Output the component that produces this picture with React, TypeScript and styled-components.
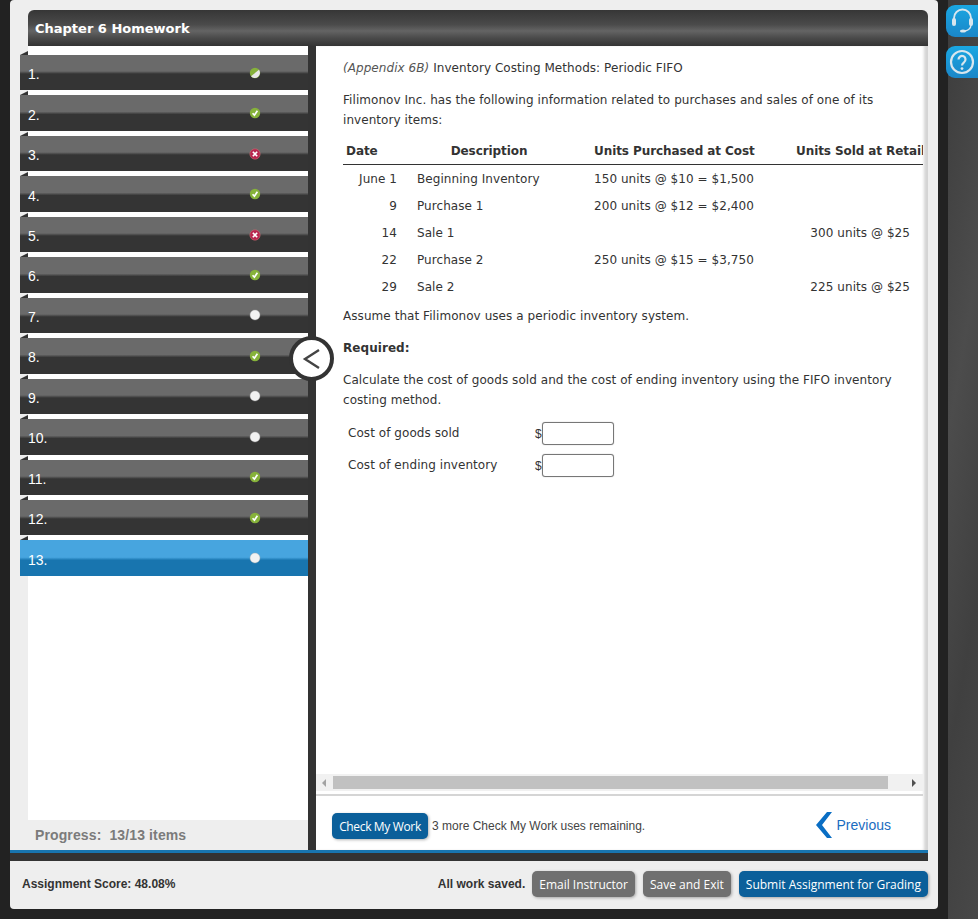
import React from 'react';
import styled, { createGlobalStyle } from 'styled-components';

const GlobalStyle = createGlobalStyle`
  html, body {
    margin: 0;
    padding: 0;
    background: #222;
    overflow: hidden;
  }
`;

type Status = 'partial' | 'correct' | 'wrong' | 'empty';

const questions: Status[] = [
  'partial', 'correct', 'wrong', 'correct', 'wrong', 'correct', 'empty',
  'correct', 'empty', 'empty', 'correct', 'correct', 'empty',
];

const inventoryRows = [
  { date: 'June 1', description: 'Beginning Inventory', purchased: '150 units @ $10 = $1,500', sold: '' },
  { date: '9', description: 'Purchase 1', purchased: '200 units @ $12 = $2,400', sold: '' },
  { date: '14', description: 'Sale 1', purchased: '', sold: '300 units @ $25' },
  { date: '22', description: 'Purchase 2', purchased: '250 units @ $15 = $3,750', sold: '' },
  { date: '29', description: 'Sale 2', purchased: '', sold: '225 units @ $25' },
];

const Page = styled.div`
  display: flex;
  width: 978px;
  height: 919px;
  overflow: hidden;
  background: #222;
`;

const Panel = styled.div`
  width: 928px;
  height: 909px;
  margin-left: 10px;
  background: #eee;
  border-radius: 4px;
  display: flex;
  flex-direction: column;
  flex-shrink: 0;
`;

const Title = styled.header`
  width: 900px;
  height: 36px;
  margin: 10px 0 0 18px;
  padding-left: 7px;
  box-sizing: border-box;
  display: flex;
  align-items: center;
  border-radius: 6px 6px 0 0;
  background: linear-gradient(#363636 0%, #4a4a4a 40%, #646464 58%, #4a4a4a 78%, #343434 100%);
  color: #fff;
  font: bold 13px 'DejaVu Sans', Verdana, sans-serif;
`;

const Body = styled.div`
  display: flex;
  height: 804px;
  width: 918px;
`;

const Sidebar = styled.aside`
  width: 298px;
  display: flex;
  flex-direction: column;
`;

const QuestionList = styled.ol`
  list-style: none;
  height: 774px;
  margin: 0 0 0 18px;
  padding: 9px 0 0;
  box-sizing: border-box;
  background: #fff;
  display: flex;
  flex-direction: column;
  gap: 5px;
`;

const QuestionRow = styled.li<{ $active?: boolean }>`
  position: relative;
  height: 35.4532px;
  margin-left: -8px;
  padding: 3px 47px 0 8px;
  box-sizing: border-box;
  display: flex;
  align-items: center;
  justify-content: space-between;
  color: #fff;
  font: 14px 'Liberation Sans', Arial, sans-serif;
  background: ${(p) =>
    p.$active
      ? 'linear-gradient(#47a5df 0, #47a5df 48%, #1875af 56%, #1875af 100%)'
      : 'linear-gradient(#6a6a6a 0, #6a6a6a 46%, #343434 54%, #343434 100%)'};

  &::before {
    content: '';
    position: absolute;
    left: 0;
    top: -4px;
    border-style: solid;
    border-width: 0 0 4px 8px;
    border-color: transparent transparent #333 transparent;
  }
`;

const StatusMark = styled.svg`
  display: block;
  width: 12px;
  height: 12px;
  margin-top: -3px;
`;

const Progress = styled.div`
  height: 30px;
  padding: 0 0 0 25px;
  display: flex;
  align-items: center;
  color: #7b7b7b;
  font: bold 14px 'Liberation Sans', Arial, sans-serif;
  letter-spacing: 0.12px;
  white-space: pre;
`;

const Main = styled.main`
  position: relative;
  width: 620px;
  border-left: 8px solid #333;
  box-sizing: border-box;
  display: flex;
  flex-direction: column;
  background: #fff;
  box-shadow: inset -5px 0 3px -1px #d4d4d4;
`;

const CollapseButton = styled.button`
  position: absolute;
  left: -27px;
  top: 290px;
  width: 45px;
  height: 45px;
  padding: 0;
  border: 4px solid #333;
  border-radius: 50%;
  box-sizing: border-box;
  background: #fff;
  display: flex;
  align-items: center;
  justify-content: center;
`;

const Content = styled.div`
  flex: 1;
  min-height: 0;
  width: 607px;
  padding: 12px 0 0 27px;
  box-sizing: border-box;
  overflow: hidden;
  color: #333;
  font: 12px/20px 'DejaVu Sans', Verdana, sans-serif;
  letter-spacing: 0.06px;
`;

const Paragraph = styled.p<{ $gap?: number }>`
  margin: ${(p) => p.$gap ?? 12}px 0 0;
  width: 562px;
`;

const Muted = styled.em`
  color: #555;
`;

const InventoryTable = styled.table`
  table-layout: fixed;
  width: 587px;
  margin-top: 7px;
  border-collapse: collapse;
`;

const HeadCell = styled.th<{ $pad?: string; $align?: string }>`
  height: 27px;
  padding: ${(p) => p.$pad ?? '0'};
  text-align: ${(p) => p.$align ?? 'left'};
  border-bottom: 1px solid #333;
  white-space: nowrap;
  overflow: visible;
  letter-spacing: -0.08px;
`;

const Cell = styled.td<{ $pad?: string; $align?: string }>`
  height: 27px;
  padding: ${(p) => p.$pad ?? '0'};
  text-align: ${(p) => p.$align ?? 'left'};
  white-space: nowrap;
`;

const AnswerGrid = styled.div`
  display: flex;
  flex-direction: column;
  gap: 9px;
  margin: 12px 0 0 5px;
`;

const AnswerRow = styled.label`
  display: flex;
  align-items: center;
  height: 23px;
`;

const AnswerLabel = styled.span`
  width: 187px;
  margin-top: -1px;
`;

const Dollar = styled.span`
  font: 12px 'Liberation Sans', Arial, sans-serif;
`;

const AnswerInput = styled.input`
  width: 72px;
  height: 23px;
  padding: 0;
  box-sizing: border-box;
  background: #fff;
  border: 1px solid #777;
  border-radius: 3px;
  box-shadow: 0 0 1px #999;
`;

const ScrollTrack = styled.div`
  width: 607px;
  height: 17px;
  margin-bottom: 3px;
  display: flex;
  align-items: center;
  background: #f1f1f1;
  flex-shrink: 0;
`;

const ScrollArrow = styled.span<{ $side: 'left' | 'right' }>`
  width: 0;
  height: 0;
  margin: ${(p) => (p.$side === 'left' ? '0 7px 0 6px' : '0 0 0 24px')};
  border-style: solid;
  border-width: 4px 0 4px 4px;
  border-color: transparent transparent transparent #505050;
  ${(p) => p.$side === 'left' && 'border-width: 4px 4px 4px 0; border-color: transparent #a3a3a3 transparent transparent;'}
`;

const ScrollThumb = styled.div`
  width: 555px;
  height: 13px;
  background: #c1c1c1;
`;

const ActionBar = styled.div`
  width: 607px;
  height: 56px;
  padding: 0 32px 0 16px;
  box-sizing: border-box;
  border-top: 2px solid #d5d5d5;
  display: flex;
  align-items: center;
  flex-shrink: 0;
  font: 12px 'Liberation Sans', Arial, sans-serif;
  color: #444;
`;

const Button = styled.button<{ $tone: 'blue' | 'gray' }>`
  height: 26px;
  padding: 0 7px;
  border: 0;
  border-radius: 5px;
  color: #fff;
  white-space: nowrap;
  background: ${(p) => (p.$tone === 'blue' ? '#0b5f9a' : '#707070')};
  box-shadow: 1px 1px 3px rgba(0, 0, 0, 0.3);
  font: 12px 'Open Sans', sans-serif;
`;

const CheckButton = styled(Button)`
  width: 96px;
  padding: 0;
  margin: 6px 4px 0 0;
  letter-spacing: -0.35px;
`;

const Remaining = styled.span`
  margin-top: 6px;
`;

const PreviousLink = styled.a`
  margin-left: auto;
  display: flex;
  align-items: center;
  gap: 5px;
  margin-top: 4px;
  color: #1a6cc0;
  font-size: 14px;
`;

const Stripe = styled.div`
  height: 11px;
  width: 918px;
  box-sizing: border-box;
  background: #333;
  border-top: 3px solid #1875af;
  flex-shrink: 0;
`;

const BottomBar = styled.footer`
  flex: 1;
  display: flex;
  align-items: center;
  padding: 0 10px 2px 12px;
  box-sizing: border-box;
  color: #333;
  font: bold 12px 'Liberation Sans', Arial, sans-serif;
`;

const SavedNote = styled.span`
  margin: 0 7px 0 auto;
`;

const FooterButtons = styled.div`
  display: flex;
  gap: 8px;
`;

const Rail = styled.div`
  flex: none;
  width: 30px;
  height: 919px;
  margin-left: 10px;
  padding-top: 5px;
  box-sizing: border-box;
  display: flex;
  flex-direction: column;
  gap: 9px;
  background: linear-gradient(100deg, #3c3c3c, #4c4c4c 40%, #404040 70%, #484848);
`;

const RailButton = styled.button`
  width: 32px;
  height: 32px;
  margin-left: -2px;
  padding: 0;
  border: 0;
  border-radius: 9px 0 0 9px;
  background: linear-gradient(#1aa7e2, #1a86c8);
  display: flex;
  align-items: center;
  justify-content: center;
  flex-shrink: 0;
`;

const StatusIcon = ({ status }: { status: Status }) => {
  if (status === 'empty') {
    return (
      <StatusMark viewBox="0 0 12 12">
        <circle cx="6" cy="6" r="5" fill="#f2f2f2" stroke="#aaa" strokeWidth="0.4" />
      </StatusMark>
    );
  }
  if (status === 'wrong') {
    return (
      <StatusMark viewBox="0 0 12 12">
        <circle cx="6" cy="6" r="5.2" fill="#b8264f" stroke="#c77" strokeWidth="0.5" />
        <path d="M3.8 3.8l4.4 4.4M8.2 3.8l-4.4 4.4" stroke="#fff" strokeWidth="1.6" />
      </StatusMark>
    );
  }
  if (status === 'partial') {
    return (
      <StatusMark viewBox="0 0 12 12">
        <circle cx="6" cy="6" r="5.2" fill="#86b23a" />
        <path d="M10 2.7A5.2 5.2 0 0 1 2 9.3z" fill="#e8e8e8" />
      </StatusMark>
    );
  }
  return (
    <StatusMark viewBox="0 0 12 12">
      <circle cx="6" cy="6" r="5.2" fill="#86b23a" />
      <path d="M3.6 6.2l1.8 2 3-4.4" fill="none" stroke="#fff" strokeWidth="1.7" />
    </StatusMark>
  );
};

export default function App() {
  return (
    <Page>
      <GlobalStyle />
      <Panel>
        <Title>Chapter 6 Homework</Title>
        <Body>
          <Sidebar>
            <QuestionList>
              {questions.map((status, i) => (
                <QuestionRow key={i} $active={i === 12}>
                  <span>{i + 1}.</span>
                  <StatusIcon status={status} />
                </QuestionRow>
              ))}
            </QuestionList>
            <Progress>Progress:  13/13 items</Progress>
          </Sidebar>
          <Main>
            <CollapseButton aria-label="Collapse">
              <svg width="22" height="24" viewBox="0 0 22 24">
                <path d="M18 3L4 12l14 9" fill="none" stroke="#444" strokeWidth="2.4" />
              </svg>
            </CollapseButton>
            <Content>
              <Paragraph $gap={0}>
                <Muted>(Appendix 6B)</Muted> Inventory Costing Methods: Periodic FIFO
              </Paragraph>
              <Paragraph>
                Filimonov Inc. has the following information related to purchases and sales of one of its inventory items:
              </Paragraph>
              <InventoryTable>
                <colgroup>
                  <col width="64" />
                  <col width="177" />
                  <col width="202" />
                  <col width="144" />
                </colgroup>
                <thead>
                  <tr>
                    <HeadCell $pad="0 0 0 3px">Date</HeadCell>
                    <HeadCell $align="center" $pad="0 13px 0 0">Description</HeadCell>
                    <HeadCell $pad="0 0 0 10px">Units Purchased at Cost</HeadCell>
                    <HeadCell $pad="0 0 0 10px">Units Sold at Retail</HeadCell>
                  </tr>
                </thead>
                <tbody>
                  {inventoryRows.map((row) => (
                    <tr key={row.date}>
                      <Cell $align="right" $pad="0 10px 0 0">{row.date}</Cell>
                      <Cell $pad="0 0 0 10px">{row.description}</Cell>
                      <Cell $pad="0 0 0 10px">{row.purchased}</Cell>
                      <Cell $align="right" $pad="0 20px 0 0">{row.sold}</Cell>
                    </tr>
                  ))}
                </tbody>
              </InventoryTable>
              <Paragraph $gap={6}>Assume that Filimonov uses a periodic inventory system.</Paragraph>
              <Paragraph><strong>Required:</strong></Paragraph>
              <Paragraph>
                Calculate the cost of goods sold and the cost of ending inventory using the FIFO inventory costing method.
              </Paragraph>
              <AnswerGrid>
                <AnswerRow>
                  <AnswerLabel>Cost of goods sold</AnswerLabel>
                  <Dollar>$</Dollar>
                  <AnswerInput />
                </AnswerRow>
                <AnswerRow>
                  <AnswerLabel>Cost of ending inventory</AnswerLabel>
                  <Dollar>$</Dollar>
                  <AnswerInput />
                </AnswerRow>
              </AnswerGrid>
            </Content>
            <ScrollTrack>
              <ScrollArrow $side="left" />
              <ScrollThumb />
              <ScrollArrow $side="right" />
            </ScrollTrack>
            <ActionBar>
              <CheckButton $tone="blue">Check My Work</CheckButton>
              <Remaining>3 more Check My Work uses remaining.</Remaining>
              <PreviousLink>
                <svg width="16" height="26" viewBox="0 0 16 26">
                  <path d="M11 0h5L6 13l10 13h-5L0 13z" fill="#0a6ec4" />
                </svg>
                Previous
              </PreviousLink>
            </ActionBar>
          </Main>
        </Body>
        <Stripe />
        <BottomBar>
          Assignment Score: 48.08%
          <SavedNote>All work saved.</SavedNote>
          <FooterButtons>
            <Button $tone="gray">Email Instructor</Button>
            <Button $tone="gray">Save and Exit</Button>
            <Button $tone="blue">Submit Assignment for Grading</Button>
          </FooterButtons>
        </BottomBar>
      </Panel>
      <Rail>
        <RailButton aria-label="Support">
          <svg width="26" height="28" viewBox="0 0 26 28">
            <path d="M5 15V11a8.5 8.5 0 0 1 17 0v4" fill="none" stroke="#d8e6ee" strokeWidth="1.8" />
            <rect x="3" y="11" width="4" height="8" rx="2" fill="#d8e6ee" />
            <rect x="20" y="11" width="4" height="8" rx="2" fill="#d8e6ee" />
            <path d="M22 18c0 4-4 6-7 6" fill="none" stroke="#d8e6ee" strokeWidth="1.4" />
            <ellipse cx="14" cy="24" rx="3" ry="1.6" fill="#d8e6ee" />
          </svg>
        </RailButton>
        <RailButton aria-label="Help">
          <svg width="26" height="26" viewBox="0 0 26 26">
            <circle cx="13" cy="13" r="11" fill="none" stroke="#d8e6ee" strokeWidth="2.2" />
            <path d="M9.5 10.5a3.5 3.5 0 1 1 5.5 2.8c-1.3 1-2 1.6-2 3.2" fill="none" stroke="#d8e6ee" strokeWidth="2.2" />
            <circle cx="13" cy="19.6" r="1.4" fill="#d8e6ee" />
          </svg>
        </RailButton>
      </Rail>
    </Page>
  );
}
